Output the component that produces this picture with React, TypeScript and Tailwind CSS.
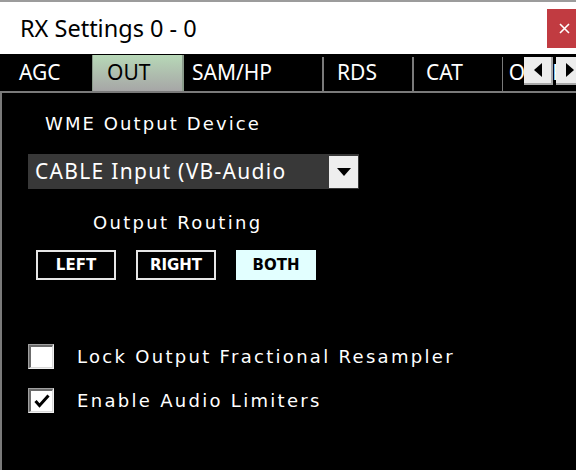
import React from "react";

const ui = { fontFamily: '"Noto Sans", "Open Sans", sans-serif' };
const dv = { fontFamily: '"DejaVu Sans", Verdana, sans-serif' };

function Checkbox({ checked }: { checked?: boolean }) {
  return (
    <div className="w-[26px] h-[25px] border-t border-l border-[#a0a0a0] border-r border-b border-r-[#f0f0f0] border-b-[#f0f0f0] bg-[#e3e3e3]">
      <div className="w-full h-full border-t-2 border-l-2 border-[#6b6b6b] border-r border-b border-r-[#d8d8d8] border-b-[#d8d8d8] bg-white flex items-center justify-center">
        {checked && (
          <svg width="16" height="14" viewBox="0 0 16 14">
            <path d="M1.5 7 L5.5 11.5 L14.5 1.5" fill="none" stroke="#000" strokeWidth="3" />
          </svg>
        )}
      </div>
    </div>
  );
}

function RouteBtn({ label, active }: { label: string; active?: boolean }) {
  return (
    <div
      className={
        "w-[80px] h-[30px] flex items-center justify-center border-2 text-[15px] font-bold " +
        (active ? "bg-[#e2ffff] border-[#e2ffff] text-black" : "bg-black border-[#e6e6e6] text-white")
      }
      style={dv}
    >
      {label}
    </div>
  );
}

export default function App() {
  return (
    <div className="w-[576px] h-[470px] bg-black flex flex-col overflow-hidden">
      {/* Title bar */}
      <div className="h-[54px] shrink-0 bg-white border-t-2 border-[#9c9c9c] flex justify-between items-start">
        <div className="pl-[20px] pt-[10px] text-[23.5px] leading-[32px] text-black" style={ui}>
          RX Settings 0 - 0
        </div>
        <div className="mt-[7px] w-[29px] h-[39px] bg-[#c13b41] flex items-center justify-center pl-[6px]">
          <svg width="11" height="11" viewBox="0 0 11 11">
            <path d="M1 1 L10 10 M10 1 L1 10" stroke="#fff" strokeWidth="1.6" />
          </svg>
        </div>
      </div>

      {/* Tab strip */}
      <div className="relative h-[39px] shrink-0 border-b-2 border-[#7a7a7a] flex overflow-hidden">
        <div className="w-[92px] shrink-0 flex items-center pl-[19px] text-white text-[21px]" style={ui}>AGC</div>
        <div
          className="w-[92px] shrink-0 mt-[1px] flex items-center pl-[14px] text-black text-[21px] border-l border-r-2 border-[#8a9a8a] bg-gradient-to-b from-[#b7d8b7] to-[#a6a6a6]"
          style={ui}
        >
          OUT
        </div>
        <div className="w-[138px] shrink-0 flex items-center pl-[8px] text-white text-[21px]" style={ui}>SAM/HP</div>
        <div className="w-[90px] shrink-0 flex items-center">
          <div className="self-end h-[34px] w-[2px] bg-[#7a7a7a]" />
          <div className="pl-[13px] text-white text-[21px]" style={ui}>RDS</div>
        </div>
        <div className="w-[90px] shrink-0 flex items-center">
          <div className="self-end h-[34px] w-[2px] bg-[#7a7a7a]" />
          <div className="pl-[12px] text-white text-[21px]" style={ui}>CAT</div>
        </div>
        <div className="w-[90px] shrink-0 flex items-center">
          <div className="self-end h-[34px] w-[2px] bg-[#7a7a7a]" />
          <div className="pl-[6px] text-white text-[21px]" style={ui}>OUTPUT</div>
        </div>
        {/* scroll arrows overlay */}
        <div className="absolute left-[524px] top-[3px] flex gap-[3px]">
          <div className="w-[29px] h-[28px] bg-[#ececec] border-r-2 border-b-2 border-[#a8a8a8] flex items-center justify-center">
            <svg width="8" height="14" viewBox="0 0 8 14">
              <path d="M8 0 L0 7 L8 14 Z" fill="#000" />
            </svg>
          </div>
          <div className="w-[29px] h-[28px] bg-[#ececec] border-r-2 border-b-2 border-[#a8a8a8] flex items-center justify-center">
            <svg width="8" height="14" viewBox="0 0 8 14">
              <path d="M0 0 L8 7 L0 14 Z" fill="#000" />
            </svg>
          </div>
        </div>
      </div>

      {/* Panel */}
      <div className="flex-1 border-l-2 border-[#7a7a7a] flex flex-col">
        <div className="pl-[43px] pt-[20px] text-[18px] leading-[21px] tracking-[2.1px] text-white" style={dv}>
          WME Output Device
        </div>
        <div className="ml-[26px] mt-[20px] w-[331px] h-[35px] bg-[#383838] flex items-center justify-between pl-[7px] pr-[1px]">
          <span className="text-white text-[21px] tracking-[1.3px]" style={ui}>CABLE Input (VB-Audio</span>
          <div className="w-[29px] h-[32px] bg-[#eeeeee] flex items-center justify-center">
            <svg width="14" height="8" viewBox="0 0 14 8">
              <path d="M0 0 L14 0 L7 8 Z" fill="#000" />
            </svg>
          </div>
        </div>
        <div className="pl-[91px] mt-[23px] text-[18px] leading-[21px] tracking-[2.3px] text-white" style={dv}>
          Output Routing
        </div>
        <div className="ml-[34px] mt-[17px] flex gap-[20px]">
          <RouteBtn label="LEFT" />
          <RouteBtn label="RIGHT" />
          <RouteBtn label="BOTH" active />
        </div>
        <div className="ml-[26px] mt-[64px] flex flex-col gap-[19px]">
          <div className="flex items-center gap-[23px]">
            <Checkbox />
            <span className="text-[18px] leading-[21px] tracking-[2.3px] text-white" style={dv}>
              Lock Output Fractional Resampler
            </span>
          </div>
          <div className="flex items-center gap-[23px]">
            <Checkbox checked />
            <span className="text-[18px] leading-[21px] tracking-[2.3px] text-white" style={dv}>
              Enable Audio Limiters
            </span>
          </div>
        </div>
      </div>
    </div>
  );
}
